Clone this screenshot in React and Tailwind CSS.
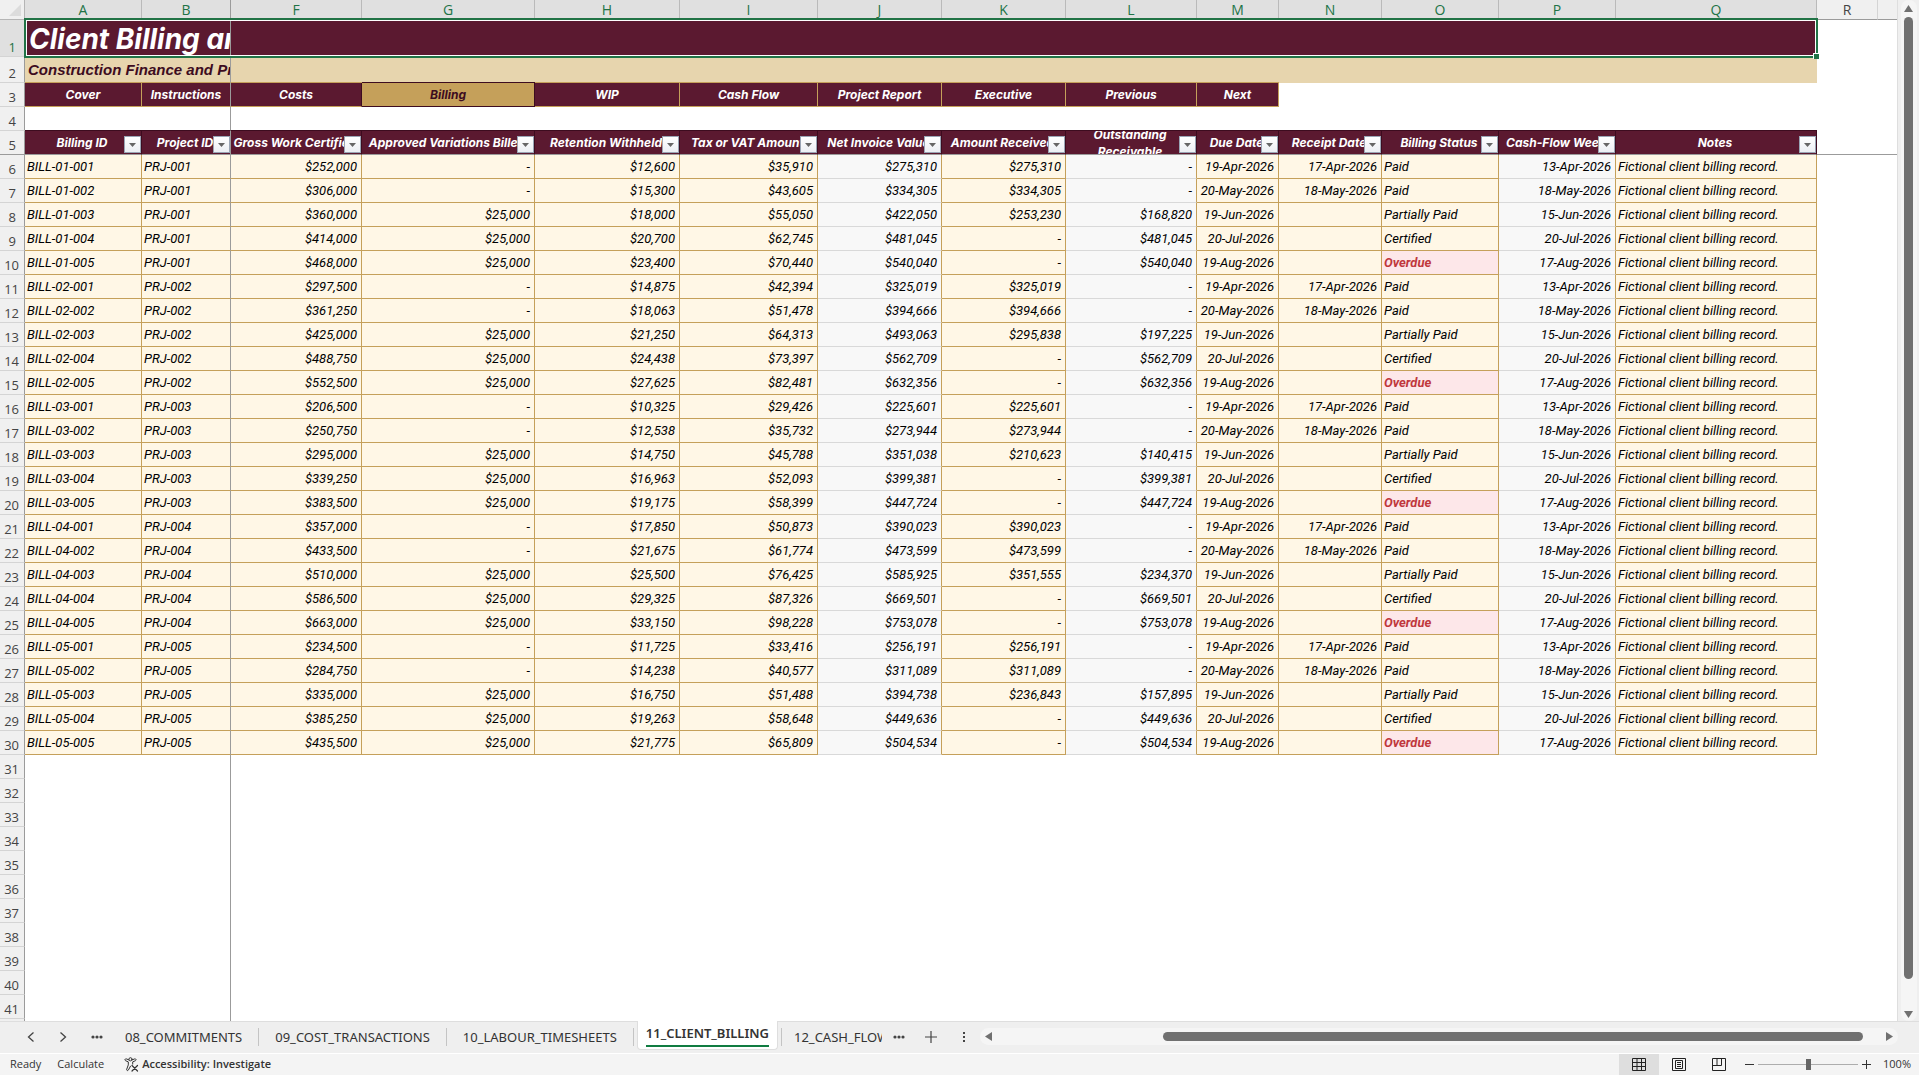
import clsx from 'clsx';

const COLUMNS = [
  { letter: 'A', label: 'Billing ID', nav: 'Cover', width: 'w-[117px]' },
  { letter: 'B', label: 'Project ID', nav: 'Instructions', width: 'w-[89px]' },
  { letter: 'F', label: 'Gross Work Certified', nav: 'Costs', width: 'w-[131px]', align: 'right' },
  { letter: 'G', label: 'Approved Variations Billed', nav: 'Billing', width: 'w-[173px]', align: 'right' },
  { letter: 'H', label: 'Retention Withheld', nav: 'WIP', width: 'w-[145px]', align: 'right' },
  { letter: 'I', label: 'Tax or VAT Amount', nav: 'Cash Flow', width: 'w-[138px]', align: 'right' },
  { letter: 'J', label: 'Net Invoice Value', nav: 'Project Report', width: 'w-[124px]', align: 'right', calc: true },
  { letter: 'K', label: 'Amount Received', nav: 'Executive', width: 'w-[124px]', align: 'right' },
  { letter: 'L', label: 'Outstanding Receivable', nav: 'Previous', width: 'w-[131px]', align: 'right', calc: true },
  { letter: 'M', label: 'Due Date', nav: 'Next', width: 'w-[82px]', align: 'right' },
  { letter: 'N', label: 'Receipt Date', width: 'w-[103px]', align: 'right' },
  { letter: 'O', label: 'Billing Status', width: 'w-[117px]' },
  { letter: 'P', label: 'Cash-Flow Week', width: 'w-[117px]', align: 'right', calc: true },
  { letter: 'Q', label: 'Notes', width: 'w-[201px]' },
];

// gross, variations, retention, tax, net, received, outstanding
const AMOUNTS = [
  ['252,000', '-', '12,600', '35,910', '275,310', '275,310', '-'],
  ['306,000', '-', '15,300', '43,605', '334,305', '334,305', '-'],
  ['360,000', '25,000', '18,000', '55,050', '422,050', '253,230', '168,820'],
  ['414,000', '25,000', '20,700', '62,745', '481,045', '-', '481,045'],
  ['468,000', '25,000', '23,400', '70,440', '540,040', '-', '540,040'],
  ['297,500', '-', '14,875', '42,394', '325,019', '325,019', '-'],
  ['361,250', '-', '18,063', '51,478', '394,666', '394,666', '-'],
  ['425,000', '25,000', '21,250', '64,313', '493,063', '295,838', '197,225'],
  ['488,750', '25,000', '24,438', '73,397', '562,709', '-', '562,709'],
  ['552,500', '25,000', '27,625', '82,481', '632,356', '-', '632,356'],
  ['206,500', '-', '10,325', '29,426', '225,601', '225,601', '-'],
  ['250,750', '-', '12,538', '35,732', '273,944', '273,944', '-'],
  ['295,000', '25,000', '14,750', '45,788', '351,038', '210,623', '140,415'],
  ['339,250', '25,000', '16,963', '52,093', '399,381', '-', '399,381'],
  ['383,500', '25,000', '19,175', '58,399', '447,724', '-', '447,724'],
  ['357,000', '-', '17,850', '50,873', '390,023', '390,023', '-'],
  ['433,500', '-', '21,675', '61,774', '473,599', '473,599', '-'],
  ['510,000', '25,000', '25,500', '76,425', '585,925', '351,555', '234,370'],
  ['586,500', '25,000', '29,325', '87,326', '669,501', '-', '669,501'],
  ['663,000', '25,000', '33,150', '98,228', '753,078', '-', '753,078'],
  ['234,500', '-', '11,725', '33,416', '256,191', '256,191', '-'],
  ['284,750', '-', '14,238', '40,577', '311,089', '311,089', '-'],
  ['335,000', '25,000', '16,750', '51,488', '394,738', '236,843', '157,895'],
  ['385,250', '25,000', '19,263', '58,648', '449,636', '-', '449,636'],
  ['435,500', '25,000', '21,775', '65,809', '504,534', '-', '504,534'],
];

// Every project runs through the same five billing stages
const STAGES = [
  ['19-Apr-2026', '17-Apr-2026', 'Paid', '13-Apr-2026'],
  ['20-May-2026', '18-May-2026', 'Paid', '18-May-2026'],
  ['19-Jun-2026', '', 'Partially Paid', '15-Jun-2026'],
  ['20-Jul-2026', '', 'Certified', '20-Jul-2026'],
  ['19-Aug-2026', '', 'Overdue', '17-Aug-2026'],
];

const ROWS = AMOUNTS.map((amounts, i) => {
  const project = Math.floor(i / 5) + 1;
  const stage = (i % 5) + 1;
  return [
    `BILL-0${project}-00${stage}`,
    `PRJ-00${project}`,
    ...amounts.map((a) => (a === '-' ? a : `$${a}`)),
    ...STAGES[i % 5],
    'Fictional client billing record.',
  ];
});

const EMPTY_ROWS = [31, 32, 33, 34, 35, 36, 37, 38, 39, 40, 41];

const RowNumber = ({ n, active, frozen }) => (
  <th
    scope="row"
    className={clsx(
      'border-r border-b border-r-[#9b9b9b] p-0 text-right align-bottom font-[Open_Sans,sans-serif] text-[13px] leading-[18px] font-normal not-italic',
      active ? 'bg-[#e0e0e0] text-[#217346]' : 'bg-[#f0f0f0] text-[#444]',
      n < 10 ? 'pr-2' : 'pr-[5px]',
      frozen ? 'border-b-[#9b9b9b]' : 'border-b-[#d4d4d4]'
    )}
  >
    {n}
  </th>
);

const FilterButton = ({ label }) => (
  <button
    type="button"
    aria-label={`Filter ${label}`}
    className="absolute right-0 bottom-px flex h-[17px] w-[17px] items-center justify-center border border-[#9aa5b5] bg-linear-to-b from-white to-[#eceff4]"
  >
    <svg width="7" height="4" viewBox="0 0 7 4">
      <path d="M0 0h7L3.500 4z" fill="#666" />
    </svg>
  </button>
);

const Grid = () => (
  <table className="w-full table-fixed border-separate border-spacing-0">
    <colgroup>
      <col className="w-[25px]" />
      {COLUMNS.map((c) => (
        <col key={c.letter} className={c.width} />
      ))}
      <col className="w-[61px]" />
      <col />
    </colgroup>
    <thead>
      <tr className="h-5 bg-[#e0e0e0] font-[Open_Sans,sans-serif] text-sm leading-[19px] text-[#217346]">
        <th className="border-r border-b border-[#b5b5b5] bg-[#f0f0f0] p-0">
          <svg width="12" height="12" viewBox="0 0 12 12" className="ml-[9px]">
            <path d="M12 0v12H0z" fill="#dcdcdc" />
          </svg>
        </th>
        {COLUMNS.map((c) => (
          <th
            key={c.letter}
            scope="col"
            className={clsx(
              'border-r border-b border-b-[#9b9b9b] p-0 font-normal',
              c.letter === 'B' ? 'border-r-[#9b9b9b]' : 'border-r-[#bababa]'
            )}
          >
            {c.letter}
          </th>
        ))}
        <th scope="col" className="border-r border-b border-r-[#d4d4d4] border-b-[#9b9b9b] bg-[#f0f0f0] p-0 font-normal text-[#444]">
          R
        </th>
        <th className="border-b border-[#9b9b9b] bg-[#f0f0f0] p-0" />
      </tr>
    </thead>
    <tbody className="font-[Roboto,sans-serif] text-[13px] leading-[17px] italic">
      <tr className="h-[37px]">
        <RowNumber n={1} active />
        <td colSpan={2} className="border-r border-[#9b9b9b] bg-[#5b1930] p-0">
          <h1 className="overflow-hidden pl-1 font-[Inter,sans-serif] text-[28px] leading-8 font-bold whitespace-nowrap text-white">
            Client Billing and Receivables
          </h1>
        </td>
        <td colSpan={12} className="bg-[#5b1930] p-0" />
      </tr>
      <tr className="h-[26px]">
        <RowNumber n={2} />
        <td colSpan={2} className="border-r border-b border-r-[#9b9b9b] border-b-[#c5a05a] bg-[#e7d5ae] p-0">
          <h2 className="overflow-hidden pl-[3px] font-[Liberation_Sans,sans-serif] text-[15px] leading-6 font-bold whitespace-nowrap text-[#3d0c1f]">
            Construction Finance and Project Controls
          </h2>
        </td>
        <td className="border-b border-[#c5a05a] bg-[#e7d5ae] p-0" />
        <td className="border-b border-[#3d0c1f] bg-[#e7d5ae] p-0" />
        <td colSpan={6} className="border-b border-[#c5a05a] bg-[#e7d5ae] p-0" />
        <td colSpan={4} className="bg-[#e7d5ae] p-0" />
      </tr>
      <tr className="h-6 font-[Inter,sans-serif] text-xs leading-[17px]">
        <RowNumber n={3} />
        {COLUMNS.filter((c) => c.nav).map((c) => (
          <td
            key={c.letter}
            className={clsx(
              'border-r border-b p-0 text-center font-bold',
              c.nav === 'Billing'
                ? 'border-b-[#3d0c1f] bg-[#c5a05a] text-[#3d0c1f]'
                : 'border-b-[#c5a05a] bg-[#5b1930] text-white',
              c.letter === 'B' && 'border-r-[#9b9b9b]',
              (c.letter === 'F' || c.letter === 'G') && 'border-r-[#3d0c1f]',
              !['B', 'F', 'G'].includes(c.letter) && 'border-r-[#c5a05a]'
            )}
          >
            <a href="#sheet">{c.nav}</a>
          </td>
        ))}
      </tr>
      <tr className="h-6">
        <RowNumber n={4} />
        <td colSpan={2} className="border-r border-b border-r-[#9b9b9b] border-b-[#3d0c1f] p-0" />
        <td colSpan={12} className="border-b border-[#3d0c1f] p-0" />
      </tr>
      <tr className="h-6 font-[Inter,sans-serif] text-xs leading-[17px]">
        <RowNumber n={5} frozen />
        {COLUMNS.map((c) => (
          <td
            key={c.letter}
            className={clsx(
              'border-r border-b border-b-[#9b9b9b] bg-[#5b1930] p-0 text-center font-bold text-white',
              c.letter === 'B' ? 'border-r-[#9b9b9b]' : 'border-r-[#3d0c1f]'
            )}
          >
            <div
              className={clsx(
                'relative flex h-[23px] items-center justify-center overflow-hidden pr-0.5',
                c.letter !== 'L' && 'whitespace-nowrap'
              )}
            >
              {c.label}
              <FilterButton label={c.label} />
            </div>
          </td>
        ))}
        <td colSpan={2} className="border-b border-[#9b9b9b] p-0" />
      </tr>
      {ROWS.map((row, i) => (
        <tr key={row[0]} className="h-6">
          <RowNumber n={i + 6} />
          {COLUMNS.map((c, j) => {
            const overdue = row[j] === 'Overdue';
            return (
              <td
                key={c.letter}
                className={clsx(
                  'border-r border-b py-0 pr-1 pl-[2px] whitespace-nowrap',
                  c.align === 'right' && 'text-right',
                  c.calc ? 'border-b-[#d9d9d9] bg-[#f8f8f8]' : 'border-b-[#c5a05a]',
                  !c.calc && !overdue && 'bg-[#fff7e6]',
                  overdue ? 'bg-[#fde7e9] font-bold text-[#c0383d]' : 'text-black',
                  c.letter === 'B' ? 'border-r-[#9b9b9b]' : 'border-r-[#c5a05a]'
                )}
              >
                {row[j]}
              </td>
            );
          })}
        </tr>
      ))}
      {EMPTY_ROWS.map((n) => (
        <tr key={n} className="h-6">
          <RowNumber n={n} />
          <td colSpan={2} className="border-r border-[#9b9b9b] p-0" />
        </tr>
      ))}
      {/* top sliver of the next row */}
      <tr className="h-0.5">
        <td className="border-r border-[#9b9b9b] bg-[#f0f0f0] p-0" />
        <td colSpan={2} className="border-r border-[#9b9b9b] p-0" />
      </tr>
    </tbody>
  </table>
);

const Selection = () => (
  <div className="pointer-events-none absolute top-[18px] left-6 h-10 w-[1794px] border-2 border-[#217346]">
    <div className="h-full border border-white" />
    <div className="absolute -right-[3px] -bottom-[3px] h-[6px] w-[6px] border-t border-l border-white bg-[#217346]" />
  </div>
);

const VerticalScrollbar = () => (
  <div className="flex w-[22px] flex-col items-center border-l border-[#dedede] bg-[#efefef]">
    <div className="flex w-4 flex-1 flex-col items-center rounded-lg bg-[#f5f5f5]">
      <svg width="9" height="7" viewBox="0 0 9 7" className="mt-[5px] mb-[5px]">
        <path d="M4.500 0 9 7H0z" fill="#707070" />
      </svg>
      <div className="w-[9px] flex-1 rounded-full bg-[#707070]" />
      <svg width="9" height="7" viewBox="0 0 9 7" className="mt-8 mb-[3px]">
        <path d="M0 0h9L4.500 7z" fill="#707070" />
      </svg>
    </div>
  </div>
);

const MoreSheets = () => (
  <button type="button" aria-label="More sheets">
    <svg width="12" height="4" viewBox="0 0 12 4" fill="#444">
      <circle cx="2" cy="2" r="1.600" />
      <circle cx="6" cy="2" r="1.600" />
      <circle cx="10" cy="2" r="1.600" />
    </svg>
  </button>
);

const HorizontalScrollbar = () => (
  <div className="mr-[21px] flex h-[17px] min-w-0 flex-1 items-center rounded-full bg-[#f5f5f5] px-[5px]">
    <svg width="7" height="9" viewBox="0 0 7 9">
      <path d="M7 0v9L0 4.500z" fill="#707070" />
    </svg>
    <div className="ml-[171px] h-[9px] flex-1 rounded-full bg-[#707070]" />
    <svg width="7" height="9" viewBox="0 0 7 9" className="ml-[23px]">
      <path d="M0 0v9l7-4.500z" fill="#707070" />
    </svg>
  </div>
);

const TabBar = () => (
  <nav className="flex h-[33px] items-center border-t border-b border-t-[#dedede] border-b-white bg-[#efefef] pb-0.5 font-[Noto_Sans,sans-serif] text-[13px] text-[#333]">
    <div className="flex items-center gap-6 pl-[27px]">
      <button type="button" aria-label="Previous sheet">
        <svg width="8" height="10" viewBox="0 0 8 10" fill="none" stroke="#444" strokeWidth="1.300">
          <path d="M6.500 .5 1.500 5l5 4.500" />
        </svg>
      </button>
      <button type="button" aria-label="Next sheet">
        <svg width="8" height="10" viewBox="0 0 8 10" fill="none" stroke="#444" strokeWidth="1.300">
          <path d="M1.500 .5l5 4.500-5 4.500" />
        </svg>
      </button>
      <MoreSheets />
    </div>
    <a href="#08" className="ml-[22px] border-r border-[#c4c4c4] pr-4 leading-[18px]">08_COMMITMENTS</a>
    <a href="#09" className="border-r border-[#c4c4c4] px-4 leading-[18px]">09_COST_TRANSACTIONS</a>
    <a href="#10" className="border-r border-[#c4c4c4] px-4 leading-[18px]">10_LABOUR_TIMESHEETS</a>
    <a href="#11" aria-current="page" className="ml-[3px] flex h-[31px] flex-col">
      <span className="h-[29px] rounded-b border border-t-0 border-[#dedede] bg-white px-2 font-semibold">
        <span className="block border-b-2 border-[#107c41] leading-6">11_CLIENT_BILLING</span>
      </span>
    </a>
    <div className="ml-[3px] border-l border-[#c4c4c4] pl-3 leading-[18px]">
      <a href="#12" className="block w-[88px] overflow-hidden">12_CASH_FLOW</a>
    </div>
    <div className="ml-[11px] flex items-center">
      <MoreSheets />
    </div>
    <button type="button" aria-label="New sheet" className="ml-5">
      <svg width="12" height="12" viewBox="0 0 12 12" stroke="#444" strokeWidth="1.200">
        <path d="M6 0v12M0 6h12" />
      </svg>
    </button>
    <span className="mr-[14px] ml-[25px]">
      <svg width="4" height="12" viewBox="0 0 4 12" fill="#444">
        <path d="M1 1h2v2H1zM1 5h2v2H1zM1 9h2v2H1z" />
      </svg>
    </span>
    <HorizontalScrollbar />
  </nav>
);

const AccessibilityIcon = () => (
  <svg width="15" height="15" viewBox="0 0 15 15" fill="none" stroke="#333" strokeLinecap="round" strokeLinejoin="round">
    <circle cx="6.500" cy="2.300" r="1.600" />
    <path d="M4.900 2.900 2.300 1.900C.9 1.500.4 3.200 1.600 3.700L4.300 4.900v3L2.700 12.300c-.4 1.300 1.200 1.800 1.700.7L6.500 9.200" />
    <path d="M8.100 2.900l2.600-1c1.400-.4 1.900 1.300.7 1.800L8.700 4.900v2.200" />
    <path d="M8 8.500l5.500 5.500M13.500 8.500 8 14" strokeWidth="1.200" />
  </svg>
);

const ViewButton = ({ label, active, children }) => (
  <button
    type="button"
    aria-label={label}
    className={clsx('flex h-full w-10 items-center justify-center', active && 'bg-[#dedede]')}
  >
    <svg width="14" height="13" viewBox="0 0 14 13" fill="none" stroke="#222" strokeWidth="1">
      {children}
    </svg>
  </button>
);

const StatusBar = () => (
  <footer className="flex h-[21px] items-center bg-[#f4f4f4] font-[Open_Sans,sans-serif] text-[11px] text-[#333]">
    <span className="pl-2.5">Ready</span>
    <span className="pl-4">Calculate</span>
    <button type="button" className="flex items-center gap-[3px] pl-5 font-semibold">
      <AccessibilityIcon />
      Accessibility: Investigate
    </button>
    <div className="ml-auto flex h-full items-center pr-2">
      <ViewButton label="Normal" active>
        <path d="M.5.5h13v12H.5zM.5 4.500h13M.5 8.500h13M5 .5v12M9.500.5v12" />
      </ViewButton>
      <ViewButton label="Page Layout">
        <path d="M.5.5h13v12H.5zM3.500 2.500h7v8h-7zM5 4.500h4M5 6.500h4M5 8.500h4" />
      </ViewButton>
      <ViewButton label="Page Break Preview">
        <path d="M.5.5h13v12H.5zM.5 7.500h9V.5M5 .5v7" />
      </ViewButton>
      <button type="button" aria-label="Zoom out" className="ml-[6px]">
        <svg width="9" height="9" viewBox="0 0 9 9" stroke="#333">
          <path d="M0 4.500h9" />
        </svg>
      </button>
      <input
        type="range"
        aria-label="Zoom"
        min="0"
        max="200"
        defaultValue="100"
        className="mx-1 h-[11px] w-[100px] appearance-none bg-linear-to-b from-transparent from-45% via-[#666] via-45% to-transparent to-55% [&::-webkit-slider-thumb]:h-[11px] [&::-webkit-slider-thumb]:w-[5px] [&::-webkit-slider-thumb]:appearance-none [&::-webkit-slider-thumb]:bg-[#666]"
      />
      <button type="button" aria-label="Zoom in">
        <svg width="9" height="9" viewBox="0 0 9 9" stroke="#333">
          <path d="M0 4.500h9M4.500 0v9" />
        </svg>
      </button>
      <span className="ml-3">100%</span>
    </div>
  </footer>
);

export default function App() {
  return (
    <div className="flex min-h-screen flex-col overflow-hidden bg-white">
      <main className="flex flex-1">
        <div className="relative min-w-0 flex-1">
          <Grid />
          <Selection />
        </div>
        <VerticalScrollbar />
      </main>
      <TabBar />
      <StatusBar />
    </div>
  );
}
